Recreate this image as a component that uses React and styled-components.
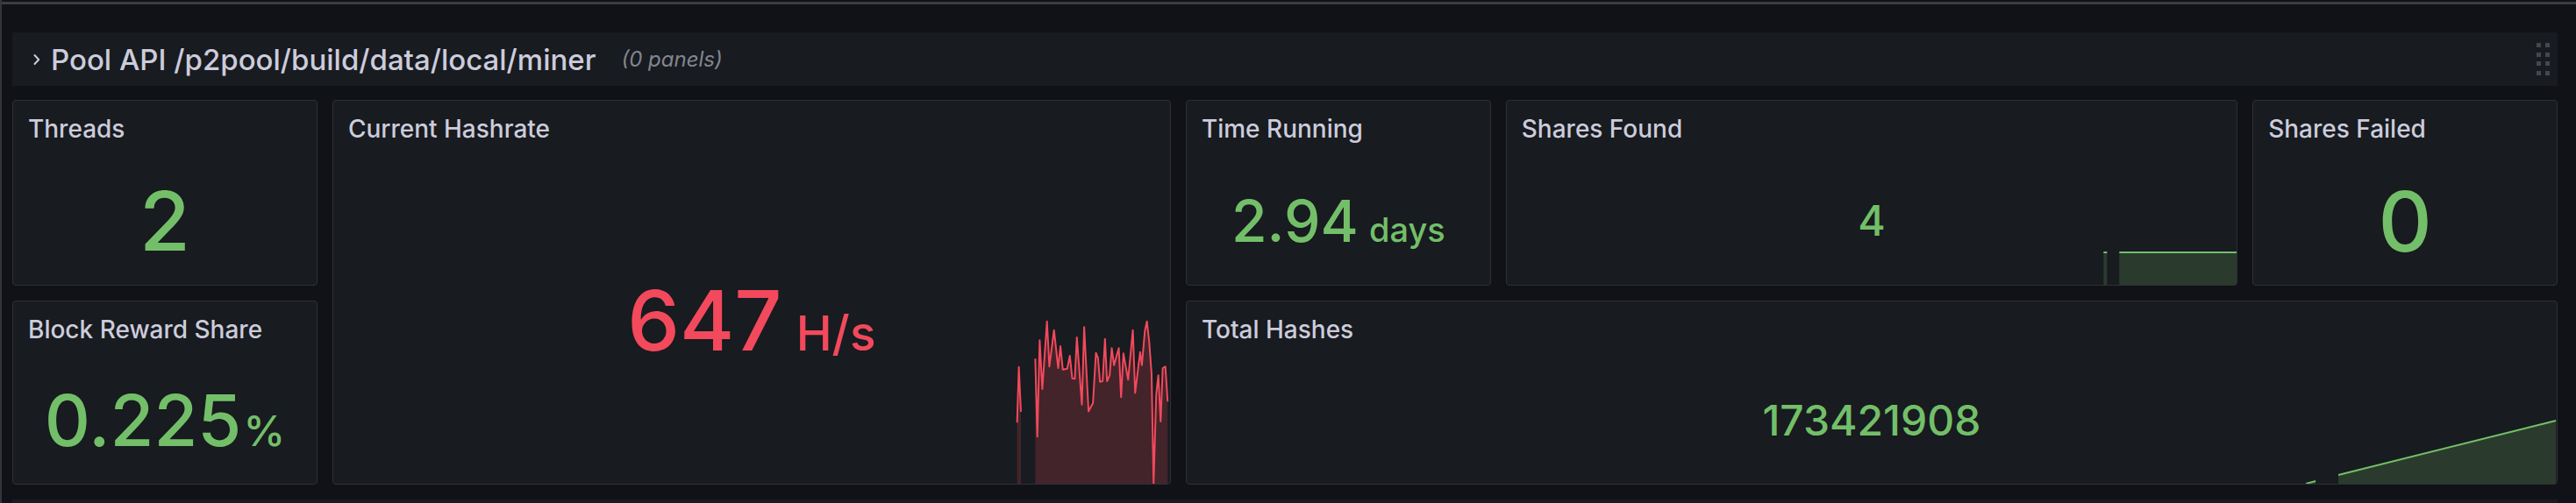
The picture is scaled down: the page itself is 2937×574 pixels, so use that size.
import React from "react";
import styled, { createGlobalStyle } from "styled-components";

const GREEN = "#73bf69";
const RED = "#f2495c";

const GlobalStyle = createGlobalStyle`
  html, body {
    margin: 0;
    padding: 0;
    background: #111217;
  }
  body {
    font-family: Inter, "Noto Sans", sans-serif;
    color: #ccccdc;
  }
`;

const Page = styled.div`
  width: 2937px;
  height: 574px;
  overflow: hidden;
  box-sizing: border-box;
  background: #111217;
  border-left: 2px solid #34353b;
`;

const TopEdge = styled.div`
  height: 3px;
  margin-top: 2px;
  background: #3c3d43;
`;

const Dashboard = styled.div`
  padding: 32px 21px 0 12px;
`;

const RowHeader = styled.div`
  height: 61px;
  display: flex;
  align-items: center;
  padding: 0 9px 0 24px;
  background: #181b1f;
  margin-top: ${(p) => p.$top || 0}px;
`;

const RowTitle = styled.span`
  margin-left: 12px;
  font-size: 33px;
  font-weight: 500;
  color: #ccccdc;
  white-space: nowrap;
`;

const PanelCount = styled.span`
  margin-left: 29px;
  font-size: 24px;
  font-style: italic;
  color: rgba(204, 204, 220, 0.62);
`;

const DragHandle = styled.div`
  margin-left: auto;
  display: grid;
  grid-template-columns: 5px 5px;
  grid-auto-rows: 5px;
  column-gap: 5px;
  row-gap: 5.6px;
  span {
    background: #46474e;
  }
`;

const Grid = styled.div`
  display: grid;
  grid-template-columns: repeat(24, minmax(0, 1fr));
  grid-template-rows: 212px 210px;
  gap: 17px;
  margin-top: 16px;
`;

const Panel = styled.section`
  grid-column: span ${(p) => p.$cols};
  grid-row: span ${(p) => p.$rows || 1};
  position: relative;
  display: flex;
  flex-direction: column;
  min-width: 0;
  background: #181b1f;
  border: 1px solid #2e3036;
  border-radius: 4px;
  overflow: hidden;
`;

const PanelTitle = styled.h2`
  margin: 0;
  height: 64px;
  flex-shrink: 0;
  display: flex;
  align-items: center;
  padding: 0 17px;
  font-size: 28px;
  font-weight: 500;
  color: #ccccdc;
  white-space: nowrap;
`;

const StatBody = styled.div`
  position: relative;
  z-index: 1;
  flex: 1;
  display: flex;
  align-items: center;
  justify-content: center;
`;

const Value = styled.div`
  font-size: ${(p) => p.$size}px;
  font-weight: 500;
  line-height: 1;
  color: ${(p) => p.$color};
  white-space: nowrap;
`;

const Unit = styled.span`
  font-size: ${(p) => p.$size}px;
  margin-left: ${(p) => p.$gap || 0}px;
`;

const Spark = styled.svg`
  position: absolute;
  left: 0;
  bottom: 0;
  width: 100%;
  height: ${(p) => p.$h}px;
  z-index: 0;
  display: block;
`;

const Chevron = () => (
  <svg width="8" height="16" viewBox="0 0 8 16">
    <polyline
      points="1.5,3 6.2,8 1.5,13"
      fill="none"
      stroke="#ccccdc"
      strokeWidth="2"
      strokeLinecap="round"
      strokeLinejoin="round"
    />
  </svg>
);

const hashA = [
  [1158, 482.3],
  [1160, 418.7],
  [1162.3, 470],
];

const hashB = [
  [1178.7, 409.3], [1181, 498.3], [1183.7, 388.3], [1186.7, 444],
  [1192, 366.7], [1194.7, 418.3], [1200, 376.7], [1204.7, 420],
  [1207.3, 395], [1210, 421.7], [1215, 420.7], [1218, 406],
  [1220.7, 431.7], [1223.7, 432.3], [1226, 385], [1231.7, 461.7],
  [1234.3, 373.3], [1239.3, 469.3], [1244.3, 460], [1247.7, 402.7],
  [1250, 408.3], [1252.3, 435.7], [1255.3, 435], [1258, 386.7],
  [1260.3, 435], [1263.3, 428.3], [1265.7, 397.3], [1268.3, 416.7],
  [1273.7, 397.3], [1276.3, 453.3], [1279, 403.3], [1284.3, 433.3],
  [1289.7, 376.7], [1292.3, 448.3], [1298, 401.7], [1300, 416.7],
  [1303.3, 378.3], [1305.7, 366.7], [1308.3, 390], [1311, 426.7],
  [1313.3, 551.7], [1316.3, 450], [1318.7, 428.3], [1321.3, 481],
  [1323.7, 420], [1326.7, 418.3], [1329.3, 458.3],
];

const toLine = (pts) => pts.map((p) => p.join(",")).join(" ");
const toArea = (pts, base) =>
  `${pts[0][0]},${base} ${toLine(pts)} ${pts[pts.length - 1][0]},${base}`;

// each series is drawn in page coordinates, the viewBox cuts out the panel's bottom strip
const Series = ({ pts, base, color, fill }) => (
  <>
    <polygon points={toArea(pts, base)} fill={fill} stroke="none" />
    <polyline
      points={toLine(pts)}
      fill="none"
      stroke={color}
      strokeWidth="2"
      strokeLinejoin="round"
    />
  </>
);

const HashrateSpark = () => (
  <Spark $h={190} viewBox="380 362 952 190" preserveAspectRatio="none">
    <Series pts={hashA} base={552} color={RED} fill="rgba(242,73,92,0.2)" />
    <Series pts={hashB} base={552} color={RED} fill="rgba(242,73,92,0.2)" />
  </Spark>
);

const SharesSpark = () => (
  <Spark $h={60} viewBox="1718 265 832 60" preserveAspectRatio="none">
    <Series pts={[[2398, 288], [2402, 288]]} base={325} color={GREEN} fill="rgba(115,191,105,0.2)" />
    <Series pts={[[2416, 288], [2550, 288]]} base={325} color={GREEN} fill="rgba(115,191,105,0.2)" />
  </Spark>
);

const TotalSpark = () => (
  <Spark $h={100} viewBox="1353 452 1562 100" preserveAspectRatio="none">
    <Series pts={[[2629, 552], [2640, 549]]} base={552} color={GREEN} fill="rgba(115,191,105,0.2)" />
    <Series pts={[[2666, 542], [2914, 480]]} base={552} color={GREEN} fill="rgba(115,191,105,0.2)" />
  </Spark>
);

const StatPanel = ({ title, cols, rows, value, unit, size, unitSize, unitGap, color = GREEN, spark }) => (
  <Panel $cols={cols} $rows={rows}>
    <PanelTitle>{title}</PanelTitle>
    {spark}
    <StatBody>
      <Value $size={size} $color={color}>
        {value}
        {unit && (
          <Unit $size={unitSize} $gap={unitGap}>
            {unit}
          </Unit>
        )}
      </Value>
    </StatBody>
  </Panel>
);

const App = () => {
  return (
    <Page>
      <GlobalStyle />
      <TopEdge />
      <Dashboard>
        <RowHeader>
          <Chevron />
          <RowTitle>Pool API /p2pool/build/data/local/miner</RowTitle>
          <PanelCount>(0 panels)</PanelCount>
          <DragHandle>
            {Array.from({ length: 8 }).map((_, i) => (
              <span key={i} />
            ))}
          </DragHandle>
        </RowHeader>

        <Grid>
          <StatPanel title="Threads" cols={3} value="2" size={94} />
          <StatPanel
            title="Current Hashrate"
            cols={8}
            rows={2}
            value="647"
            unit="H/s"
            size={95}
            unitSize={55}
            unitGap={16}
            color={RED}
            spark={<HashrateSpark />}
          />
          <StatPanel
            title="Time Running"
            cols={3}
            value="2.94"
            unit="days"
            size={66}
            unitSize={38}
            unitGap={12}
          />
          <StatPanel title="Shares Found" cols={7} value="4" size={48} spark={<SharesSpark />} />
          <StatPanel title="Shares Failed" cols={3} value="0" size={95} />
          <StatPanel
            title="Block Reward Share"
            cols={3}
            value="0.225"
            unit="%"
            size={81}
            unitSize={48}
            unitGap={2}
          />
          <StatPanel
            title="Total Hashes"
            cols={13}
            value="173421908"
            size={48}
            spark={<TotalSpark />}
          />
        </Grid>

        <RowHeader $top={17} />
      </Dashboard>
    </Page>
  );
};

export default App;
